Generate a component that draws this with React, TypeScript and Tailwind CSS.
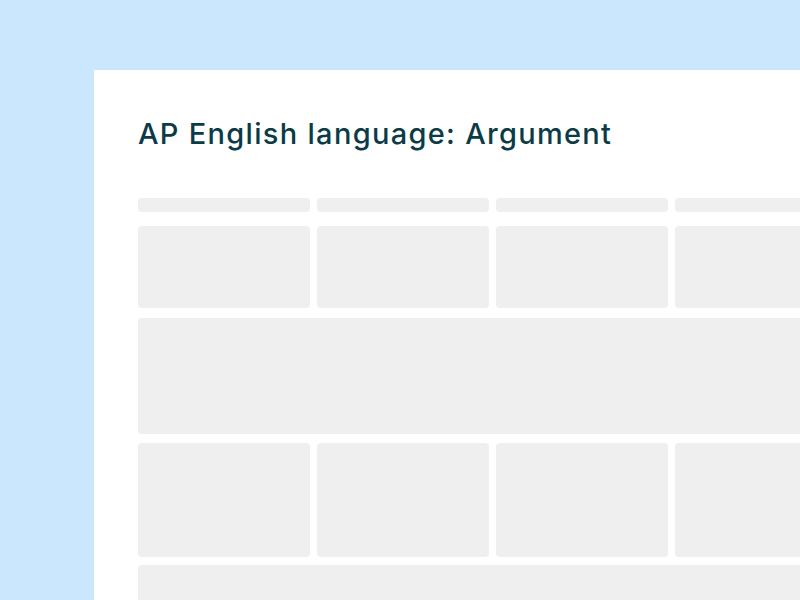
export default function App() {
  const cols = [0, 1, 2, 3];

  return (
    <div className="h-[600px] w-[800px] overflow-hidden bg-[#cbe7fe] pl-[94px] pt-[70px]">
      <div className="h-full overflow-hidden bg-white pl-[44px] pt-[46px]">
        <h1 className="whitespace-nowrap font-['Inter',sans-serif] text-[29px] font-medium leading-[36px] tracking-[1.3px] text-[#0b3b47]">
          AP English language: Argument
        </h1>

        <div className="mt-[46px] w-[709px]">
          {/* header cells */}
          <div className="grid grid-cols-[repeat(4,172px)] gap-x-[7px]">
            {cols.map((c) => (
              <div key={c} className="h-[14px] rounded-[4px] bg-[#efefef]" />
            ))}
          </div>

          <div className="mt-[14px] grid grid-cols-[repeat(4,172px)] gap-x-[7px]">
            {cols.map((c) => (
              <div key={c} className="h-[82px] rounded-[4px] bg-[#efefef]" />
            ))}
          </div>

          <div className="mt-[10px] h-[116px] rounded-[4px] bg-[#efefef]" />

          <div className="mt-[9px] grid grid-cols-[repeat(4,172px)] gap-x-[7px]">
            {cols.map((c) => (
              <div key={c} className="h-[114px] rounded-[4px] bg-[#efefef]" />
            ))}
          </div>

          <div className="mt-[8px] h-[80px] rounded-[4px] bg-[#efefef]" />
        </div>
      </div>
    </div>
  );
}
